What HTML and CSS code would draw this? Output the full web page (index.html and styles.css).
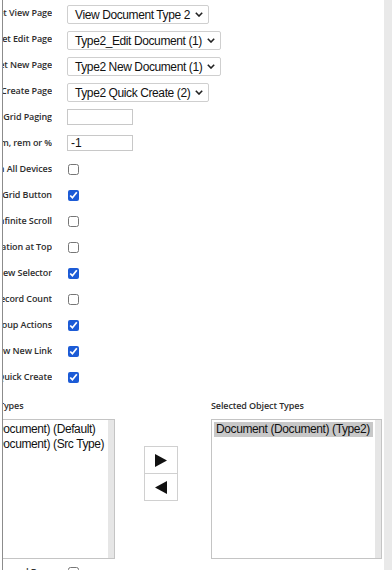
FILE: index.html
```html
<!DOCTYPE html>
<html>
<head>
<meta charset="utf-8">
<link rel="stylesheet" href="styles.css">
</head>
<body>
<div class="screen">
  <div class="frame">
    <div class="form">
      <label class="lbl"><span>Target View Page</span></label>
      <div class="select"><span>View Document Type 2</span><svg class="chev" width="8" height="5" viewBox="0 0 8 5"><polyline points="0.8,0.8 4,4 7.2,0.8" fill="none" stroke="#222" stroke-width="1.6"/></svg></div>

      <label class="lbl"><span>Target Edit Page</span></label>
      <div class="select"><span>Type2_Edit Document (1)</span><svg class="chev" width="8" height="5" viewBox="0 0 8 5"><polyline points="0.8,0.8 4,4 7.2,0.8" fill="none" stroke="#222" stroke-width="1.6"/></svg></div>

      <label class="lbl"><span>Target New Page</span></label>
      <div class="select"><span>Type2 New Document (1)</span><svg class="chev" width="8" height="5" viewBox="0 0 8 5"><polyline points="0.8,0.8 4,4 7.2,0.8" fill="none" stroke="#222" stroke-width="1.6"/></svg></div>

      <label class="lbl"><span>Quick Create Page</span></label>
      <div class="select"><span>Type2 Quick Create (2)</span><svg class="chev" width="8" height="5" viewBox="0 0 8 5"><polyline points="0.8,0.8 4,4 7.2,0.8" fill="none" stroke="#222" stroke-width="1.6"/></svg></div>

      <label class="lbl"><span>Grid Paging</span></label>
      <input class="text" type="text" value="">

      <label class="lbl"><span>Width in px, em, rem or %</span></label>
      <input class="text" type="text" value="-1">

      <label class="lbl"><span>Show on All Devices</span></label>
      <input class="check" type="checkbox">

      <label class="lbl"><span>Show Grid Button</span></label>
      <input class="check" type="checkbox" checked>

      <label class="lbl"><span>Enable Infinite Scroll</span></label>
      <input class="check" type="checkbox">

      <label class="lbl"><span>Pagination at Top</span></label>
      <input class="check" type="checkbox">

      <label class="lbl"><span>Show View Selector</span></label>
      <input class="check" type="checkbox" checked>

      <label class="lbl"><span>Show Record Count</span></label>
      <input class="check" type="checkbox">

      <label class="lbl"><span>Show Group Actions</span></label>
      <input class="check" type="checkbox" checked>

      <label class="lbl"><span>Show New Link</span></label>
      <input class="check" type="checkbox" checked>

      <label class="lbl"><span>Enable Quick Create</span></label>
      <input class="check" type="checkbox" checked>
    </div>

    <div class="lists">
      <div class="col col-left">
        <div class="list-lbl list-lbl-left">Available Object Types</div>
        <div class="listbox">
          <div class="opts">
            <div class="opt">Document (Document) (Default)</div>
            <div class="opt">Document (Document) (Src Type)</div>
          </div>
          <div class="track"></div>
        </div>
      </div>
      <div class="mover">
        <button class="mv" type="button"><svg width="12" height="13" viewBox="0 0 12 13"><polygon points="0,0 12,6.5 0,13" fill="#111"/></svg></button>
        <button class="mv" type="button"><svg width="12" height="13" viewBox="0 0 12 13"><polygon points="12,0 0,6.5 12,13" fill="#111"/></svg></button>
      </div>
      <div class="col col-right">
        <div class="list-lbl">Selected Object Types</div>
        <div class="listbox">
          <div class="opts">
            <div class="opt sel">Document (Document) (Type2)</div>
          </div>
          <div class="track"></div>
        </div>
      </div>
    </div>

    <div class="form tail">
      <label class="lbl"><span>Enable Drag and Drop</span></label>
      <input class="check" type="checkbox">
    </div>
  </div>
  <div class="scroll"></div>
</div>
</body>
</html>
```

FILE: styles.css
```css
html, body {
  margin: 0;
  padding: 0;
  background: #ffffff;
}

.screen {
  display: flex;
  width: 392px;
  height: 570px;
  overflow: hidden;
}

.frame {
  margin-left: 2px;
  border-left: 1px solid #8c8c8c;
  flex: 0 0 381px;
  overflow: hidden;
  background: #fff;
}

.scroll {
  flex: 1;
  background: #e9e9e9;
}

.form {
  display: grid;
  grid-template-columns: 49px auto;
  grid-auto-rows: 26px;
  column-gap: 15px;
  align-items: start;
  justify-items: start;
  padding-top: 5px;
}

.lbl {
  display: flex;
  justify-content: flex-end;
  justify-self: stretch;
  overflow: hidden;
  white-space: nowrap;
  font-family: "Open Sans", "Liberation Sans", sans-serif;
  font-weight: 600;
  font-size: 9px;
  letter-spacing: -0.1px;
  line-height: 15px;
  color: #2e2e2e;
}

.lbl span {
  flex-shrink: 0;
}

.select {
  display: inline-flex;
  align-items: center;
  gap: 5px;
  box-sizing: border-box;
  height: 19px;
  padding: 0 5px 0 7px;
  border: 1px solid #cfcfcf;
  border-radius: 2px;
  background: #fff;
  font-family: "Liberation Sans", Arial, sans-serif;
  font-size: 12px;
  letter-spacing: -0.4px;
  color: #111;
  white-space: nowrap;
}

.chev {
  display: block;
  flex-shrink: 0;
}

.text {
  box-sizing: border-box;
  width: 66px;
  height: 16px;
  margin: 0;
  padding: 0 3px;
  border: 1px solid #c8c8c8;
  border-radius: 0;
  font-family: "Liberation Sans", Arial, sans-serif;
  font-size: 12px;
  color: #111;
  outline: none;
}

.check {
  width: 11px;
  height: 11px;
  margin: 3px 0 0 1px;
  accent-color: #1c5bd6;
}

.lists {
  display: flex;
  align-items: flex-start;
  margin-left: -71px;
}

.col {
  display: flex;
  flex-direction: column;
}

.col-left {
  width: 183px;
}

.col-right {
  width: 171px;
}

.list-lbl {
  margin-top: 3px;
  font-family: "Open Sans", "Liberation Sans", sans-serif;
  font-weight: 600;
  font-size: 9px;
  letter-spacing: -0.1px;
  line-height: 15px;
  color: #2e2e2e;
  white-space: nowrap;
}

.list-lbl-left {
  margin-left: -4px;
}

.listbox {
  display: flex;
  box-sizing: border-box;
  height: 140px;
  margin-top: 6px;
  border: 1px solid #c4c4c4;
  background: #fff;
}

.opts {
  flex: 1;
  min-width: 0;
  padding: 2px;
  overflow: hidden;
}

.opt {
  padding-left: 2px;
  font-family: "Liberation Sans", Arial, sans-serif;
  font-size: 12px;
  letter-spacing: -0.4px;
  line-height: 14.5px;
  color: #111;
  white-space: nowrap;
}

.opt.sel {
  background: #c8c8c8;
}

.track {
  width: 6px;
  background: #e6e6e6;
}

.mover {
  display: flex;
  flex-direction: column;
  margin: 51px 33px 0 29px;
}

.mv {
  display: flex;
  align-items: center;
  justify-content: center;
  box-sizing: border-box;
  width: 34px;
  height: 28px;
  padding: 0;
  border: 1px solid #d0d0d0;
  background: #fff;
}

.mv + .mv {
  margin-top: -1px;
}

.tail {
  padding-top: 5px;
}
```
